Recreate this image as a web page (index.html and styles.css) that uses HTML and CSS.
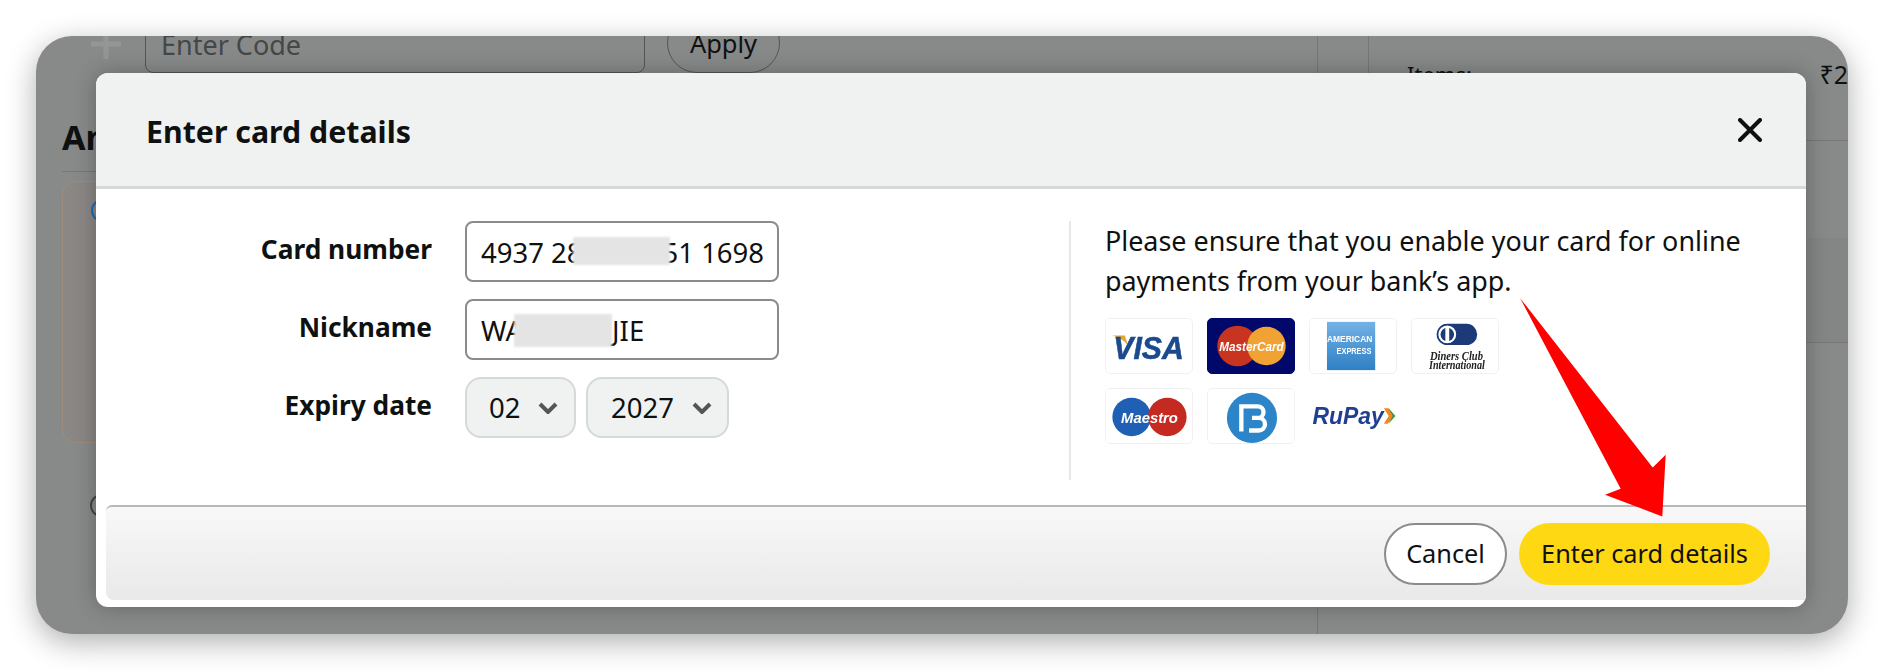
FILE: index.html
```html
<!DOCTYPE html>
<html lang="en">
<head>
<meta charset="utf-8">
<title>Enter card details</title>
<link rel="stylesheet" href="styles.css">
</head>
<body>
<div class="window">
  <div class="underlay">
    <div class="main-col">
      <div class="promo">
        <svg class="plus" viewBox="0 0 30 30"><path d="M15 0V30M0 15H30"/></svg>
        <div class="promo-input">Enter Code</div>
        <div class="promo-apply">Apply</div>
      </div>
      <h2 class="section-title">An</h2>
      <div class="pay-card"><span class="radio radio-on"></span></div>
      <span class="radio radio-off"></span>
    </div>
    <div class="gutter"></div>
    <div class="side-col">
      <div class="summary"><span class="sum-label">Items:</span><span class="sum-value">₹2</span></div>
      <div class="side-block"></div>
    </div>
  </div>

  <div class="modal">
    <header class="modal-head">
      <h1 class="modal-title">Enter card details</h1>
      <svg class="close" viewBox="0 0 24 24"><path d="M2 2L22 22M22 2L2 22"/></svg>
    </header>
    <div class="modal-body">
      <form class="form">
        <label class="label">Card number</label>
        <div class="field"><span>4937 28</span><span class="gap-card"></span><span>51 1698</span><i class="mask mask-card"></i></div>
        <label class="label">Nickname</label>
        <div class="field"><span>WA</span><span class="gap-name"></span><span>JIE</span><i class="mask mask-name"></i></div>
        <label class="label">Expiry date</label>
        <div class="selects">
          <div class="select select-month"><span>02</span><svg class="chev" viewBox="0 0 20 12"><path d="M2 2L10 10L18 2"/></svg></div>
          <div class="select select-year"><span>2027</span><svg class="chev" viewBox="0 0 20 12"><path d="M2 2L10 10L18 2"/></svg></div>
        </div>
      </form>
      <aside class="info">
        <p class="info-text">Please ensure that you enable your card for online payments from your bank’s app.</p>
        <div class="logos">
          <div class="logo">
            <svg viewBox="0 0 88 56"><path d="M6 17H19L22 27Q17 20 6 17Z" fill="#e0a92e"/><text x="7" y="41" class="t-visa" textLength="73" lengthAdjust="spacingAndGlyphs">VISA</text></svg>
          </div>
          <div class="logo logo-mc">
            <svg viewBox="0 0 88 56"><circle cx="30" cy="28" r="21" fill="#c8341f"/><circle cx="60" cy="28" r="20" fill="#f0a233"/><text x="11" y="33" class="t-mc" textLength="67" lengthAdjust="spacingAndGlyphs">MasterCard</text></svg>
          </div>
          <div class="logo">
            <svg viewBox="0 0 88 56"><defs><linearGradient id="amex" x1="0" y1="0" x2="0" y2="1"><stop offset="0" stop-color="#73b2e6"/><stop offset="1" stop-color="#2f80c4"/></linearGradient></defs><rect x="17" y="3" width="50" height="50" fill="url(#amex)"/><text x="17" y="24" class="t-amex" textLength="47" lengthAdjust="spacingAndGlyphs">AMERICAN</text><text x="27" y="36" class="t-amex" textLength="36" lengthAdjust="spacingAndGlyphs">EXPRESS</text></svg>
          </div>
          <div class="logo">
            <svg viewBox="0 0 88 56"><rect x="25" y="5" width="42" height="22" rx="11" fill="#1c3a78"/><circle cx="36" cy="16" r="10" fill="#fff" stroke="#1c3a78" stroke-width="1.5"/><circle cx="36" cy="16" r="7" fill="#1c3a78"/><rect x="34" y="8" width="4" height="16" fill="#fff"/><text x="18" y="42" class="t-din" textLength="55" lengthAdjust="spacingAndGlyphs">Diners Club</text><text x="17" y="52" class="t-din" textLength="58" lengthAdjust="spacingAndGlyphs">International</text></svg>
          </div>
          <div class="logo">
            <svg viewBox="0 0 88 56"><circle cx="26" cy="29" r="20" fill="#2060b4"/><circle cx="63" cy="29" r="20" fill="#c42a20"/><text x="15" y="35" class="t-mae" textLength="59" lengthAdjust="spacingAndGlyphs">Maestro</text></svg>
          </div>
          <div class="logo">
            <svg viewBox="0 0 88 56"><circle cx="45" cy="30" r="26" fill="#2b85c8"/><path d="M34 44V18H46M45 18H51a6 6 0 0 1 0 12H45M45 30H52a6.500 6.500 0 0 1 0 13H42" fill="none" stroke="#fff" stroke-width="4.500"/></svg>
          </div>
          <div class="logo logo-plain">
            <svg viewBox="0 0 88 56"><text x="2" y="36" class="t-rupay" textLength="74" lengthAdjust="spacingAndGlyphs">RuPay</text><path d="M76 20L81 20L87 28L80 36L76 36L81 28Z" fill="#ef8a22"/><path d="M81 20L88 28L81 36L85 28Z" fill="#3a9a48"/></svg>
          </div>
        </div>
      </aside>
    </div>
    <footer class="modal-foot">
      <button class="btn btn-cancel" type="button">Cancel</button>
      <button class="btn btn-primary" type="button">Enter card details</button>
    </footer>
  </div>

  <svg class="arrow" viewBox="0 0 150 222"><path d="M0 0L132.700 169.400L145.700 156.700L142.300 218.400L85 196.700L100.700 190.700Z"/></svg>
</div>
</body>
</html>
```

FILE: styles.css
```css
* { box-sizing: border-box; }

html, body { margin: 0; height: 100%; background: #fff; }

body {
  padding: 36px 36px 36px;
  font-family: "Noto Sans", "Open Sans", Arial, sans-serif;
  color: #0f1111;
  overflow: hidden;
}

.window {
  position: relative;
  height: 598px;
  border-radius: 36px;
  overflow: hidden;
  background: #888a8a;
  box-shadow: 0 8px 30px rgba(0, 0, 0, .32);
}

/* dimmed page behind the dialog */
.underlay { display: flex; height: 100%; }

.main-col { width: 1282px; padding-left: 26px; border-right: 1px solid #777; }

.promo {
  display: flex;
  align-items: center;
  height: 60px;
  margin-top: -23px;
  padding-left: 29px;
}

.plus { width: 30px; height: 30px; flex: none; margin-top: 2px; }
.plus path { stroke: #949696; stroke-width: 5; fill: none; }

.promo-input {
  width: 500px;
  height: 60px;
  margin-left: 24px;
  padding: 0 15px;
  border: 1px solid #555;
  border-radius: 8px;
  font-size: 27px;
  line-height: 62px;
  color: #454747;
}

.promo-apply {
  width: 113px;
  height: 60px;
  margin-left: 22px;
  border: 1px solid #555;
  border-radius: 30px;
  font-size: 25.500px;
  line-height: 58px;
  text-align: center;
  color: #0f1111;
}

.section-title {
  margin: 43px 0 0;
  padding-bottom: 13px;
  border-bottom: 1px solid #777;
  font-size: 34px;
  line-height: 42px;
  font-weight: 700;
  white-space: nowrap;
}

.pay-card {
  height: 262px;
  margin: 9px 30px 0 0;
  padding: 17px 0 0 28px;
  border: 1px solid #9e8d7a;
  border-radius: 14px;
  background: #8a8785;
}

.radio {
  display: block;
  width: 23px;
  height: 23px;
  border-radius: 50%;
  border: 2px solid #444;
}
.radio-on { border-color: #1c6cb0; }
.radio-off { margin: 51px 0 0 28px; }

.gutter { width: 50px; }

.side-col { flex: 1; min-width: 0; }

.summary {
  display: flex;
  height: 105px;
  padding: 20px 0 0 38px;
  border-left: 1px solid #777;
  border-bottom: 1px solid #777;
  font-size: 25px;
  line-height: 36px;
  white-space: nowrap;
}
.sum-label { width: 415px; font-size: 22px; }

.side-block {
  height: 105px;
  margin-top: 97px;
  background: #848686;
  border-bottom: 1px solid #777;
}

/* dialog */
.modal {
  position: absolute;
  left: 60px;
  top: 37px;
  width: 1710px;
  height: 534px;
  display: flex;
  flex-direction: column;
  background: #fff;
  border-radius: 12px;
  box-shadow: 0 0 22px rgba(0, 0, 0, .28);
  overflow: hidden;
}

.modal-head {
  display: flex;
  align-items: center;
  justify-content: space-between;
  height: 116px;
  flex: none;
  padding: 0 44px 0 51px;
  background: #f0f2f2;
  border-bottom: 3px solid #d5d9d9;
}

.modal-title { margin: 4px 0 0 -1px; font-size: 30.300px; line-height: 40px; font-weight: 700; }

.close { width: 24px; height: 24px; }
.close path { stroke: #0f1111; stroke-width: 4; stroke-linecap: round; fill: none; }

.modal-body { flex: 1; display: flex; padding-top: 32px; min-height: 0; }

.form {
  display: grid;
  grid-template-columns: 336px 314px;
  grid-auto-rows: 61px;
  column-gap: 33px;
  row-gap: 17px;
  align-content: start;
  width: 973px;
  flex: none;
}

.label {
  font-size: 26.300px;
  font-weight: 700;
  line-height: 56px;
  text-align: right;
}

.field {
  position: relative;
  display: flex;
  align-items: center;
  padding: 2px 0 0 14px;
  border: 2px solid #888c8c;
  border-radius: 8px;
  font-size: 27.500px;
  white-space: pre;
}
.gap-card { width: 80px; }
.gap-name { width: 89px; }

.mask {
  position: absolute;
  background: #e4e4e4;
  filter: blur(.8px);
}
.mask-card { left: 106px; top: 14px; width: 97px; height: 28px; }
.mask-name { left: 47px; top: 13px; width: 98px; height: 33px; }

.selects { display: flex; gap: 10px; }

.select {
  display: flex;
  align-items: center;
  gap: 18px;
  height: 61px;
  border: 2px solid #d5d9d9;
  border-radius: 16px;
  background: #f0f2f2;
  font-size: 27.500px;
}
.select-month { width: 111px; padding-left: 22px; }
.select-year { width: 143px; padding-left: 23px; }

.chev { width: 20px; height: 12px; }
.chev path { fill: none; stroke: #555; stroke-width: 4; }

.info {
  height: 259px;
  flex: 1;
  padding-left: 34px;
  border-left: 2px solid #e7e7e7;
}

.info-text {
  margin: 0;
  width: 670px;
  font-size: 26.900px;
  line-height: 40px;
}

.logos {
  display: grid;
  grid-template-columns: repeat(4, 88px);
  grid-auto-rows: 56px;
  column-gap: 14px;
  row-gap: 14px;
  margin-top: 17px;
}

.logo {
  border: 1px solid #f1f1f1;
  border-radius: 5px;
  overflow: hidden;
  filter: blur(.5px);
}
.logo svg { display: block; width: 100%; height: 100%; }
.logo-mc { background: #00096a; border-color: #00096a; }
.logo-plain { border-color: transparent; }

.t-visa { font: italic 700 33px "Liberation Sans", sans-serif; fill: #1b4a8e; stroke: #1b4a8e; stroke-width: .6; }
.t-mc { font: italic 700 14px "Liberation Sans", sans-serif; fill: #fff; }
.t-amex { font: 700 9px "Liberation Sans", sans-serif; fill: #fff; }
.t-din { font: italic 700 12px "Liberation Serif", serif; fill: #222; }
.t-mae { font: italic 700 16px "Liberation Sans", sans-serif; fill: #fff; }
.t-rupay { font: italic 700 25px "Liberation Sans", sans-serif; fill: #203f92; }

.modal-foot {
  display: flex;
  align-items: center;
  justify-content: flex-end;
  gap: 12px;
  height: 95px;
  flex: none;
  margin: 0 0 7px 10px;
  padding: 0 36px 0 0;
  border-top: 2px solid #b7b7b7;
  border-radius: 6px 0 0 8px;
  background: linear-gradient(#f8f8f8, #e9e9e9);
}

.btn {
  height: 62px;
  border-radius: 31px;
  font-family: inherit;
  font-size: 25.300px;
  color: #0f1111;
  padding: 0 0 2px;
}
.btn-cancel { width: 123px; background: #fff; border: 2px solid #888c8c; }
.btn-primary { width: 251px; background: #ffd814; border: 0; }

.arrow {
  position: absolute;
  left: 1484px;
  top: 262px;
  width: 150px;
  height: 222px;
}
.arrow path { fill: #ff0000; }
```
